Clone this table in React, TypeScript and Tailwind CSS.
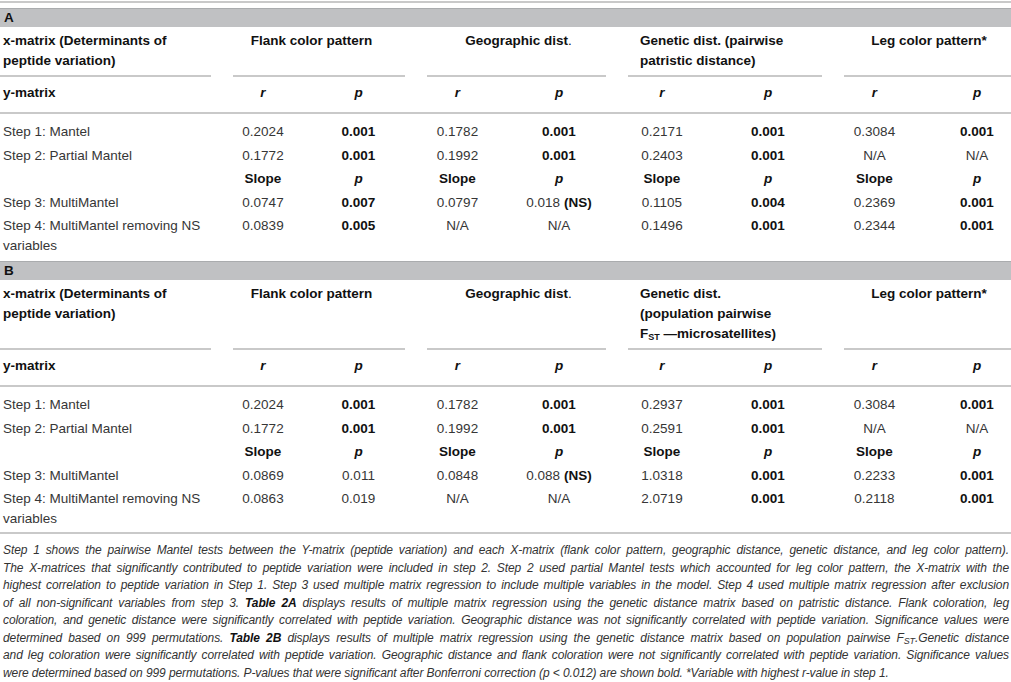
import type { ReactNode } from "react";

const GRID =
  "grid grid-cols-[216px_94px_97px_101px_102px_104px_108px_105px_84px]";

const b = (s: string) => <span className="font-bold text-[#111]">{s}</span>;
const ns = (s: string) => (
  <>
    {s} <span className="font-bold text-[#111]">(NS)</span>
  </>
);

type Row = { label: ReactNode; cells: ReactNode[] };

const rowsA: Row[] = [
  {
    label: "Step 1: Mantel",
    cells: ["0.2024", b("0.001"), "0.1782", b("0.001"), "0.2171", b("0.001"), "0.3084", b("0.001")],
  },
  {
    label: "Step 2: Partial Mantel",
    cells: ["0.1772", b("0.001"), "0.1992", b("0.001"), "0.2403", b("0.001"), "N/A", "N/A"],
  },
  {
    label: "Step 3: MultiMantel",
    cells: ["0.0747", b("0.007"), "0.0797", ns("0.018"), "0.1105", b("0.004"), "0.2369", b("0.001")],
  },
  {
    label: "Step 4: MultiMantel removing NS variables",
    cells: ["0.0839", b("0.005"), "N/A", "N/A", "0.1496", b("0.001"), "0.2344", b("0.001")],
  },
];

const rowsB: Row[] = [
  {
    label: "Step 1: Mantel",
    cells: ["0.2024", b("0.001"), "0.1782", b("0.001"), "0.2937", b("0.001"), "0.3084", b("0.001")],
  },
  {
    label: "Step 2: Partial Mantel",
    cells: ["0.1772", b("0.001"), "0.1992", b("0.001"), "0.2591", b("0.001"), "N/A", "N/A"],
  },
  {
    label: "Step 3: MultiMantel",
    cells: ["0.0869", "0.011", "0.0848", ns("0.088"), "1.0318", b("0.001"), "0.2233", b("0.001")],
  },
  {
    label: "Step 4: MultiMantel removing NS variables",
    cells: ["0.0863", "0.019", "N/A", "N/A", "2.0719", b("0.001"), "0.2118", b("0.001")],
  },
];

function Rule() {
  return <div className="h-[2px] bg-[#c9c9c9]" />;
}

function DataRow({ row }: { row: Row }) {
  return (
    <div className={`${GRID} items-start py-[2px] leading-[19.5px]`}>
      <div className="pl-[3px] pr-2">{row.label}</div>
      {row.cells.map((c, i) => (
        <div key={i} className={i === 7 ? "pl-4 text-center" : "text-center"}>
          {c}
        </div>
      ))}
    </div>
  );
}

function SubHead({ labels }: { labels: string[] }) {
  return (
    <div className={`${GRID} py-[2px] font-bold leading-[19.5px] text-[#111]`}>
      <div />
      {labels.map((l, i) => (
        <div key={i} className={i === 7 ? "pl-4 text-center" : "text-center"}>
          {l === "p" ? <span className="italic">p</span> : l}
        </div>
      ))}
    </div>
  );
}

function Section({ letter, genetic, rows }: { letter: string; genetic: ReactNode; rows: Row[] }) {
  const head = "flex flex-col";
  const line = "mt-auto h-[2px] bg-[#c9c9c9]";
  return (
    <div className="pb-1">
      <div className="h-[19px] border-t border-[#aaacae] bg-[#c0c1c3] pl-[4px] font-bold leading-[18px] text-[#111]">
        {letter}
      </div>
      <div className={`${GRID} pt-1 font-bold leading-[20px] text-[#111]`}>
        <div className={head}>
          <div className="mb-1 pl-[3px]">
            x-matrix (Determinants of
            <br />
            peptide variation)
          </div>
          <div className={`${line} mr-[5px]`} />
        </div>
        <div className={`${head} col-span-2`}>
          <div className="mb-1 text-center">Flank color pattern</div>
          <div className={`${line} ml-[17px] mr-[2px]`} />
        </div>
        <div className={`${head} col-span-2`}>
          <div className="mb-1 pl-[20px] text-center">
            Geographic dist<span className="font-normal">.</span>
          </div>
          <div className={`${line} ml-[20px] mr-[4px]`} />
        </div>
        <div className={`${head} col-span-2`}>
          <div className="mb-1 pl-[30px]">{genetic}</div>
          <div className={`${line} ml-[18px]`} />
        </div>
        <div className={`${head} col-span-2`}>
          <div className="mb-1 pl-[25px] text-center">Leg color pattern*</div>
          <div className={`${line} ml-[22px]`} />
        </div>
      </div>
      <div className={`${GRID} pb-[9px] pt-[6px] font-bold leading-[20px] text-[#111]`}>
        <div className="pl-[3px]">y-matrix</div>
        {["r", "p", "r", "p", "r", "p", "r", "p"].map((l, i) => (
          <div key={i} className={i === 7 ? "pl-4 text-center italic" : "text-center italic"}>
            {l}
          </div>
        ))}
      </div>
      <Rule />
      <div className="pt-[6px]">
        <DataRow row={rows[0]} />
        <DataRow row={rows[1]} />
        <SubHead labels={["Slope", "p", "Slope", "p", "Slope", "p", "Slope", "p"]} />
        <DataRow row={rows[2]} />
        <DataRow row={rows[3]} />
      </div>
    </div>
  );
}

const fst = (
  <>
    F<sub className="text-[9px]">ST</sub>
  </>
);

const noteLines: ReactNode[] = [
  "Step 1 shows the pairwise Mantel tests between the Y-matrix (peptide variation) and each X-matrix (flank color pattern, geographic distance, genetic distance, and leg color pattern).",
  "The X-matrices that significantly contributed to peptide variation were included in step 2. Step 2 used partial Mantel tests which accounted for leg color pattern, the X-matrix with the",
  "highest correlation to peptide variation in Step 1. Step 3 used multiple matrix regression to include multiple variables in the model. Step 4 used multiple matrix regression after exclusion",
  <>
    of all non-significant variables from step 3. <b className="text-[#111]">Table 2A</b> displays results of multiple
    matrix regression using the genetic distance matrix based on patristic distance. Flank coloration, leg
  </>,
  "coloration, and genetic distance were significantly correlated with peptide variation. Geographic distance was not significantly correlated with peptide variation. Significance values were",
  <>
    determined based on 999 permutations. <b className="text-[#111]">Table 2B</b> displays results of multiple matrix
    regression using the genetic distance matrix based on population pairwise {fst}.Genetic distance
  </>,
  "and leg coloration were significantly correlated with peptide variation. Geographic distance and flank coloration were not significantly correlated with peptide variation. Significance values",
];

export default function App() {
  return (
    <div className="w-[1011px] bg-white font-['Liberation_Sans',Arial,sans-serif] text-[13.5px] text-[#363636]">
      <div className="mt-px">
        <Rule />
      </div>
      <div className="pt-[5px]">
        <Section
          letter="A"
          rows={rowsA}
          genetic={
            <>
              Genetic dist. (pairwise
              <br />
              patristic distance)
            </>
          }
        />
        <Section
          letter="B"
          rows={rowsB}
          genetic={
            <>
              Genetic dist.
              <br />
              (population pairwise
              <br />
              <span className="leading-none">{fst}</span> —microsatellites)
            </>
          }
        />
        <div className="-mt-[2px]">
          <Rule />
        </div>
      </div>
      <div className="mt-[8px] pl-[3px] pr-[2px] text-[12px] italic leading-[17.5px] tracking-[-0.1px] text-[#333]">
        {noteLines.map((l, i) => (
          <div key={i} className="whitespace-nowrap text-justify [text-align-last:justify]">
            {l}
          </div>
        ))}
        <div>
          were determined based on 999 permutations. P-values that were significant after Bonferroni correction (p
          &lt; 0.012) are shown bold. *Variable with highest r-value in step 1.
        </div>
      </div>
    </div>
  );
}
